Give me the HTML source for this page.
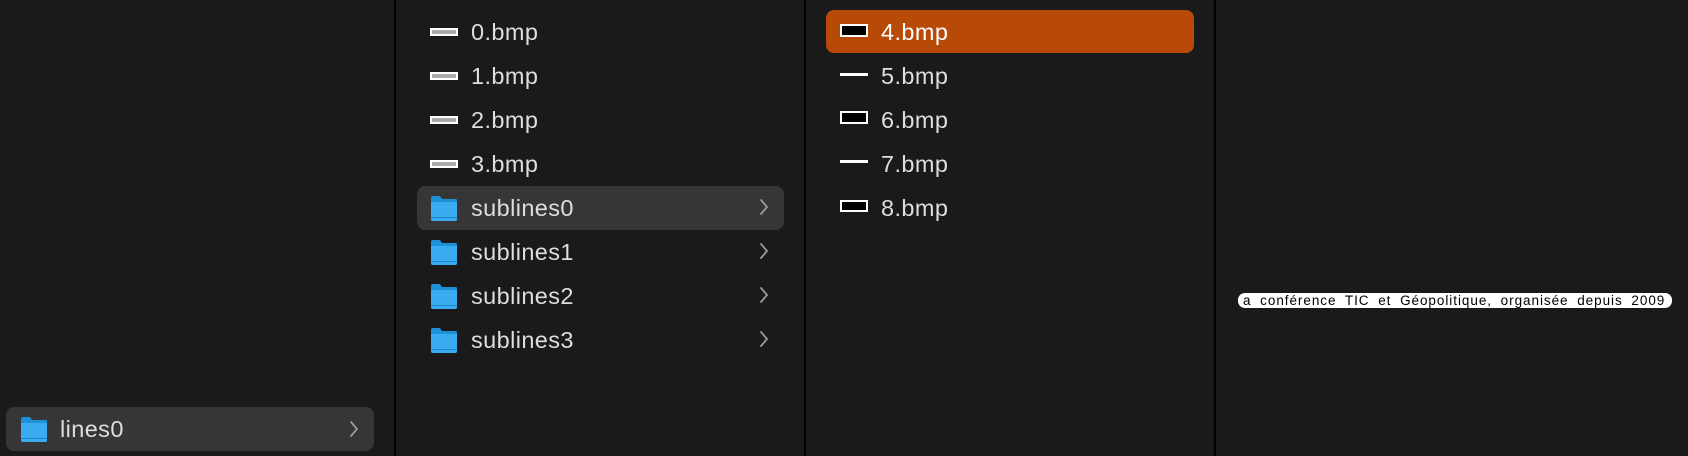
<!DOCTYPE html>
<html><head><style>
body{margin:0;width:1688px;height:456px;background:#1a1a1a;position:relative;overflow:hidden;font-family:"Liberation Sans",sans-serif;color:#dedede;font-size:23.5px;letter-spacing:0.4px}
.div{position:absolute;top:0;width:2px;height:456px;background:#000}
.hl{position:absolute;border-radius:8px}
.t{position:absolute;line-height:44px}
.fold{position:absolute;width:28px;height:26px}
.chev{position:absolute;width:12px;height:18px}
.bmp{position:absolute}
</style></head><body>
<div class="div" style="left:394px"></div>
<div class="div" style="left:804px"></div>
<div class="div" style="left:1214px"></div>

<svg width="0" height="0" style="position:absolute"><defs>
<symbol id="f" viewBox="0 0 28 26"><path d="M1 3 Q1 1 3 1 H10 L12 4 H26 Q27 4 27 6 V24 Q27 26 25 26 H3 Q1 26 1 24Z" fill="#1e90d8"/><path d="M1 7 H27 V24 Q27 26 25 26 H3 Q1 26 1 24Z" fill="#3aacef"/><rect x="1" y="22" width="26" height="1" fill="#1a85c8"/></symbol>
<symbol id="c" viewBox="0 0 12 18"><path d="M3 2 L9 9 L3 16" stroke="#9a9a9a" stroke-width="1.8" fill="none" stroke-linecap="round"/></symbol>
</defs></svg>

<div class="hl" style="left:6px;top:407px;width:368px;height:44px;background:#363636"></div>
<svg class="fold" style="left:20px;top:416px"><use href="#f"/></svg>
<div class="t" style="left:60px;top:407px">lines0</div>
<svg class="chev" style="left:348px;top:420px"><use href="#c"/></svg>

<div class="hl" style="left:417px;top:186px;width:367px;height:44px;background:#363636"></div>
<div class="hl" style="left:826px;top:10px;width:368px;height:43px;background:#b84a08"></div>

<div class="bmp" style="left:430px;top:28px;width:24px;height:4px;border:2px solid #fff;background:#aaa"></div>
<div class="t" style="left:471px;top:10px">0.bmp</div>
<div class="bmp" style="left:430px;top:72px;width:24px;height:4px;border:2px solid #fff;background:#aaa"></div>
<div class="t" style="left:471px;top:54px">1.bmp</div>
<div class="bmp" style="left:430px;top:116px;width:24px;height:4px;border:2px solid #fff;background:#aaa"></div>
<div class="t" style="left:471px;top:98px">2.bmp</div>
<div class="bmp" style="left:430px;top:160px;width:24px;height:4px;border:2px solid #fff;background:#aaa"></div>
<div class="t" style="left:471px;top:142px">3.bmp</div>

<svg class="fold" style="left:430px;top:195px"><use href="#f"/></svg>
<div class="t" style="left:471px;top:186px">sublines0</div>
<svg class="chev" style="left:758px;top:198px"><use href="#c"/></svg>
<svg class="fold" style="left:430px;top:239px"><use href="#f"/></svg>
<div class="t" style="left:471px;top:230px">sublines1</div>
<svg class="chev" style="left:758px;top:242px"><use href="#c"/></svg>
<svg class="fold" style="left:430px;top:283px"><use href="#f"/></svg>
<div class="t" style="left:471px;top:274px">sublines2</div>
<svg class="chev" style="left:758px;top:286px"><use href="#c"/></svg>
<svg class="fold" style="left:430px;top:327px"><use href="#f"/></svg>
<div class="t" style="left:471px;top:318px">sublines3</div>
<svg class="chev" style="left:758px;top:330px"><use href="#c"/></svg>

<div class="bmp" style="left:840px;top:24px;width:24px;height:9px;border:2px solid #fff;background:#000"></div>
<div class="t" style="left:881px;top:10px;color:#fff">4.bmp</div>
<div class="bmp" style="left:840px;top:73px;width:28px;height:3px;background:#fff"></div>
<div class="t" style="left:881px;top:54px">5.bmp</div>
<div class="bmp" style="left:840px;top:111px;width:24px;height:9px;border:2px solid #fff;background:#000"></div>
<div class="t" style="left:881px;top:98px">6.bmp</div>
<div class="bmp" style="left:840px;top:160px;width:28px;height:3px;background:#fff"></div>
<div class="t" style="left:881px;top:142px">7.bmp</div>
<div class="bmp" style="left:840px;top:200px;width:24px;height:8px;border:2px solid #fff;background:#000"></div>
<div class="t" style="left:881px;top:186px">8.bmp</div>

<div style="position:absolute;left:1238px;top:293px;width:434px;height:15px;background:#fff;border-radius:7px;color:#000;font-size:13.5px;line-height:15px;white-space:nowrap;overflow:hidden;letter-spacing:0.95px;word-spacing:4px;padding-left:5px;box-sizing:border-box">a conférence TIC et Géopolitique, organisée depuis 2009</div>
</body></html>
